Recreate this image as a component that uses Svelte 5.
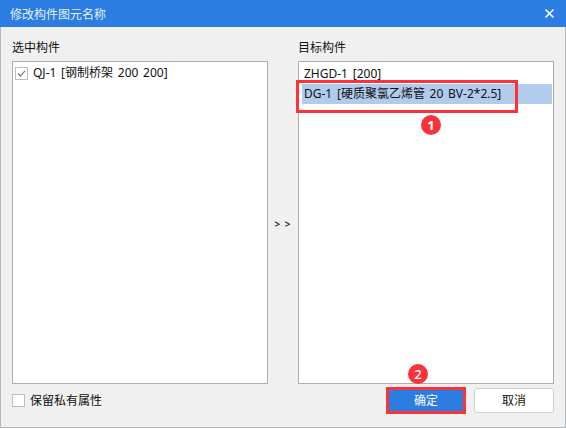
<script>
  const leftItems = ['QJ-1 [钢制桥架 200 200]'];
  const rightItems = ['ZHGD-1 [200]', 'DG-1 [硬质聚氯乙烯管 20 BV-2*2.5]'];
  const selected = 1;
</script>

<div class="dialog">
  <header class="titlebar">
    <span class="title">修改构件图元名称</span>
    <svg class="close" width="11" height="11" viewBox="0 0 11 11">
      <path d="M1.5 1.5l8 8M9.5 1.5l-8 8" stroke="#fff" stroke-width="1.6" fill="none" />
    </svg>
  </header>

  <div class="body">
    <div class="columns">
      <section class="col">
        <div class="label">选中构件</div>
        <div class="list">
          {#each leftItems as item}
            <div class="row check-row">
              <span class="box">
                <svg width="11" height="11" viewBox="0 0 11 11">
                  <path d="M2 5.5l2.4 2.6L9 2.8" stroke="#777" stroke-width="1.2" fill="none" />
                </svg>
              </span>
              <span>{item}</span>
            </div>
          {/each}
        </div>
      </section>

      <div class="arrows">&gt; &gt;</div>

      <section class="col">
        <div class="label">目标构件</div>
        <div class="list target">
          {#each rightItems as item, i}
            <div class="row" class:active={i === selected}>{item}</div>
          {/each}
          <div class="mark mark-row"></div>
          <div class="badge badge-one">1</div>
        </div>
      </section>
    </div>

    <footer class="footer">
      <label class="keep">
        <span class="box empty"></span>
        <span>保留私有属性</span>
      </label>
      <div class="buttons">
        <div class="btn-wrap">
          <button class="btn primary">确定</button>
          <div class="badge badge-two">2</div>
        </div>
        <button class="btn">取消</button>
      </div>
    </footer>
  </div>
</div>

<style>
  :global(body) {
    margin: 0;
  }

  .dialog {
    width: 566px;
    height: 428px;
    box-sizing: border-box;
    display: flex;
    flex-direction: column;
    background: #f0f0f0;
    border: 1px solid #b4b8bd;
    border-top: 0;
    font-family: "Noto Sans", "Noto Sans CJK SC", sans-serif;
    font-size: 12px;
    color: #111;
  }

  .titlebar {
    height: 27px;
    margin: 0 -1px;
    padding: 0 11px 0 10px;
    display: flex;
    align-items: center;
    justify-content: space-between;
    background: #2b7de1;
    color: #e6f0fb;
    flex: none;
  }

  .title {
    font-size: 12px;
  }

  .body {
    flex: 1;
    display: flex;
    flex-direction: column;
    padding: 0 11px 11px;
    min-height: 0;
  }

  .columns {
    display: flex;
    height: 357px;
  }

  .col {
    width: 256px;
    display: flex;
    flex-direction: column;
  }

  .label {
    height: 34px;
    padding-top: 13px;
    box-sizing: border-box;
    line-height: 16px;
  }

  .list {
    position: relative;
    flex: 1;
    box-sizing: border-box;
    padding: 2px 1px 0 3px;
    background: #fff;
    border: 1px solid #adadad;
  }

  .arrows {
    width: 30px;
    align-self: center;
    margin-top: 36px;
    text-align: center;
    font-size: 10px;
    font-weight: 600;
    letter-spacing: 1px;
  }

  .row {
    height: 20px;
    line-height: 20px;
    padding-left: 2px;
    white-space: nowrap;
    word-spacing: 1.6px;
  }

  .check-row {
    display: flex;
    align-items: center;
    gap: 5px;
    padding-left: 0;
    margin: -1px 0 0 -1px;
  }

  .active {
    background: #b1cbec;
  }

  .box {
    width: 11px;
    height: 11px;
    display: block;
    flex: none;
    background: #fff;
    border: 1px solid #bdbdbd;
  }

  .box svg {
    display: block;
  }

  .mark {
    position: absolute;
    box-sizing: border-box;
    border: 3px solid #fb3237;
  }

  .mark-row {
    left: -3px;
    top: 18px;
    width: 222px;
    height: 33px;
  }

  .badge {
    position: absolute;
    width: 20px;
    height: 20px;
    border-radius: 50%;
    background: #f8333a;
    color: #fff;
    font-size: 13px;
    font-weight: 700;
    line-height: 20px;
    text-align: center;
  }

  .badge-one {
    left: 122px;
    top: 53px;
  }

  .badge-two {
    left: 22px;
    top: -23px;
    font-weight: 500;
  }

  .footer {
    flex: 1;
    display: flex;
    align-items: center;
    justify-content: space-between;
  }

  .keep {
    display: flex;
    align-items: center;
    gap: 5px;
  }

  .buttons {
    display: flex;
    align-items: center;
    gap: 8px;
  }

  .btn-wrap {
    position: relative;
    display: flex;
  }

  .btn {
    width: 80px;
    height: 25px;
    padding: 0;
    background: #fff;
    border: 1px solid #cfcfcf;
    border-radius: 3px;
    font: inherit;
    color: #111;
  }

  .primary {
    height: 27px;
    background: #2b7de1;
    border: 3px solid #fb3237;
    border-radius: 0;
    color: #fff;
  }
</style>
